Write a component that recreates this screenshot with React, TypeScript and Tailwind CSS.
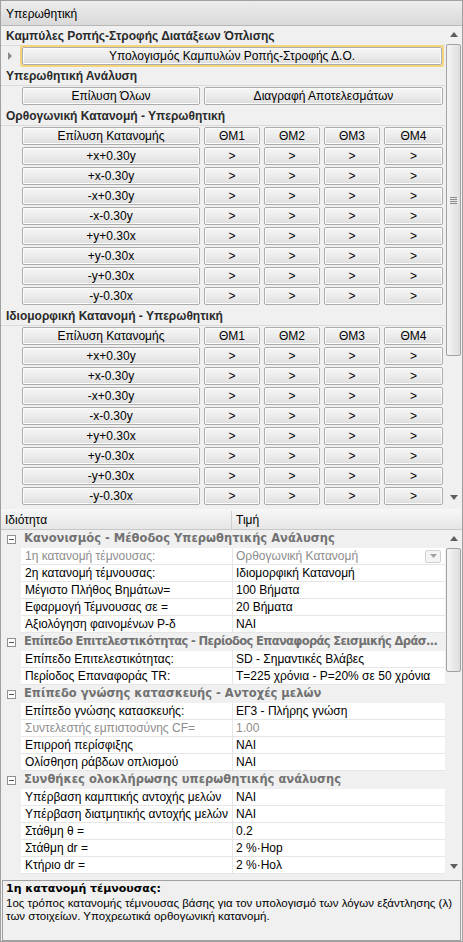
import React from 'react'

const DIRS = ['+x+0.30y', '+x-0.30y', '-x+0.30y', '-x-0.30y', '+y+0.30x', '+y-0.30x', '-y+0.30x', '-y-0.30x']

type Prop = { name: string; value: string; disabled?: boolean; combo?: boolean }
type Cat = { title: string; tight?: boolean; rows: Prop[] }

const PROPS: Cat[] = [
  {
    title: 'Κανονισμός - Μέθοδος Υπερωθητικής Ανάλυσης',
    rows: [
      { name: '1η κατανομή τέμνουσας:', value: 'Ορθογωνική Κατανομή', disabled: true, combo: true },
      { name: '2η κατανομή τέμνουσας:', value: 'Ιδιομορφική Κατανομή' },
      { name: 'Μέγιστο Πλήθος Βημάτων=', value: '100 Βήματα' },
      { name: 'Εφαρμογή Τέμνουσας σε =', value: '20 Βήματα' },
      { name: 'Αξιολόγηση φαινομένων P-δ', value: 'ΝΑΙ' },
    ],
  },
  {
    title: 'Επίπεδο Επιτελεστικότητας - Περίοδος Επαναφοράς Σεισμικής Δράσ...',
    tight: true,
    rows: [
      { name: 'Επίπεδο Επιτελεστικότητας:', value: 'SD - Σημαντικές Βλάβες' },
      { name: 'Περίοδος Επαναφοράς TR:', value: 'T=225 χρόνια - P=20% σε 50 χρόνια' },
    ],
  },
  {
    title: 'Επίπεδο γνώσης κατασκευής - Αντοχές μελών',
    rows: [
      { name: 'Επίπεδο γνώσης κατασκευής:', value: 'ΕΓ3 - Πλήρης γνώση' },
      { name: 'Συντελεστής εμπιστοσύνης CF=', value: '1.00', disabled: true },
      { name: 'Επιρροή περίσφιξης', value: 'ΝΑΙ' },
      { name: 'Ολίσθηση ράβδων οπλισμού', value: 'ΝΑΙ' },
    ],
  },
  {
    title: 'Συνθήκες ολοκλήρωσης υπερωθητικής ανάλυσης',
    rows: [
      { name: 'Υπέρβαση καμπτικής αντοχής μελών', value: 'ΝΑΙ' },
      { name: 'Υπέρβαση διατμητικής αντοχής μελών', value: 'ΝΑΙ' },
      { name: 'Στάθμη θ =', value: '0.2' },
      { name: 'Στάθμη dr =', value: '2 %·Hop' },
      { name: 'Κτήριο dr =', value: '2 %·Hoλ' },
    ],
  },
]

function Btn({ children, className = '' }: { children: React.ReactNode; className?: string }) {
  return (
    <div className={`flex h-[18px] items-center justify-center rounded-[2px] border border-[#acacac] bg-gradient-to-b from-[#f6f6f6] via-[#ececec] to-[#dcdcdc] leading-none text-black shadow-[inset_0_0_0_1px_#fcfcfc] ${className}`}>
      {children}
    </div>
  )
}

function SectionHead({ title }: { title: string }) {
  return (
    <div className="flex h-[20px] items-center border-b border-[#dadada] bg-[#f0f0f0] pl-[5px] font-bold text-[#2b2b2b]">
      {title}
    </div>
  )
}

function Row({ children }: { children: React.ReactNode }) {
  return <div className="flex h-[20px] items-center gap-[4px] pl-[21px]">{children}</div>
}

function DirGrid() {
  return (
    <>
      <Row>
        <Btn className="w-[178px]">Επίλυση Κατανομής</Btn>
        {['ΘΜ1', 'ΘΜ2', 'ΘΜ3', 'ΘΜ4'].map((t, i) => (
          <Btn key={t} className={i === 3 ? 'w-[59px]' : 'w-[56px]'}>{t}</Btn>
        ))}
      </Row>
      {DIRS.map((d) => (
        <Row key={d}>
          <Btn className="w-[178px]">{d}</Btn>
          {[0, 1, 2, 3].map((i) => (
            <Btn key={i} className={i === 3 ? 'w-[59px]' : 'w-[56px]'}>&gt;</Btn>
          ))}
        </Row>
      ))}
    </>
  )
}

function ScrollBar({ thumbTop, thumbHeight }: { thumbTop: number; thumbHeight: number }) {
  return (
    <div className="relative flex w-[17px] shrink-0 flex-col bg-[#f0f0f0]">
      <div className="flex h-[17px] items-center justify-center">
        <svg viewBox="0 0 8 5" className="h-[5px] w-[8px]"><path d="M4 0 8 5H0z" fill="#5e5e5e" /></svg>
      </div>
      <div className="flex-1" />
      <div className="flex h-[17px] items-center justify-center">
        <svg viewBox="0 0 8 5" className="h-[5px] w-[8px]"><path d="M0 0h8L4 5z" fill="#5e5e5e" /></svg>
      </div>
      <div
        className="absolute left-[1px] right-[1px] flex items-center justify-center rounded-[2px] border border-[#a2a2a2] bg-gradient-to-r from-[#f4f4f4] to-[#dedede]"
        style={{ top: thumbTop, height: thumbHeight }}
      >
        {thumbHeight > 200 ? (
          <div className="flex flex-col gap-[1px]">
            <div className="h-px w-[7px] bg-[#8a8a8a]" />
            <div className="h-px w-[7px] bg-[#8a8a8a]" />
            <div className="h-px w-[7px] bg-[#8a8a8a]" />
            <div className="h-px w-[7px] bg-[#8a8a8a]" />
          </div>
        ) : null}
      </div>
    </div>
  )
}

export default function App() {
  return (
    <div className="flex h-[942px] w-[463px] flex-col overflow-hidden border border-[#a0a0a0] bg-[#f0f0f0] font-['Liberation_Sans',Arial,sans-serif] text-[12px] text-black">
      <div className="flex h-[25px] shrink-0 items-center border-b border-[#b8b8b8] bg-gradient-to-b from-[#ededed] to-[#d9d9d9] pl-[5px] pt-[1px]">
        Υπερωθητική
      </div>

      <div className="flex h-[480px] shrink-0 overflow-hidden">
        <div className="flex-1 overflow-hidden">
          <SectionHead title="Καμπύλες Ροπής-Στροφής Διατάξεων Όπλισης" />
          <div className="relative flex h-[20px] items-center pl-[19px] pr-[1px]">
            <svg viewBox="0 0 4 8" className="absolute left-[7px] top-[6px] h-[8px] w-[4px]"><path d="M0 0 4 4 0 8z" fill="#8a8a8a" /></svg>
            <div className="w-full rounded-[3px] border-2 border-[#f6d57a]">
              <Btn className="w-full border-[#9c9c9c]">Υπολογισμός Καμπυλών Ροπής-Στροφής Δ.Ο.</Btn>
            </div>
          </div>
          <SectionHead title="Υπερωθητική Ανάλυση" />
          <Row>
            <Btn className="w-[178px]">Επίλυση Όλων</Btn>
            <Btn className="w-[239px]">Διαγραφή Αποτελεσμάτων</Btn>
          </Row>
          <SectionHead title="Ορθογωνική Κατανομή - Υπερωθητική" />
          <DirGrid />
          <SectionHead title="Ιδιομορφική Κατανομή - Υπερωθητική" />
          <DirGrid />
        </div>
        <ScrollBar thumbTop={18} thumbHeight={312} />
      </div>

      <div className="h-[3px] shrink-0" />

      <div className="flex h-[21px] shrink-0 items-center border-b border-[#c8c8c8] bg-gradient-to-b from-[#f7f7f7] to-[#e6e6e6] pt-[1px]">
        <div className="w-[231px] border-r border-[#cfcfcf] pl-[4px]">Ιδιότητα</div>
        <div className="pl-[4px]">Τιμή</div>
      </div>

      <div className="flex h-[345px] shrink-0 overflow-hidden">
        <div className="min-w-0 flex-1 overflow-hidden">
          {PROPS.map((cat) => (
            <div key={cat.title}>
              <div className="flex h-[18px] items-center whitespace-nowrap font-['DejaVu_Sans',sans-serif] text-[11.5px] font-bold text-[#727272]">
                <div className="flex w-[20px] shrink-0 justify-center">
                  <div className="flex h-[9px] w-[9px] items-center justify-center border border-[#919191] bg-white">
                    <div className="h-px w-[5px] bg-[#555]" />
                  </div>
                </div>
                <span className={`min-w-0 pl-[3px] ${cat.tight ? 'tracking-[-0.65px]' : ''}`}>{cat.title}</span>
              </div>
              {cat.rows.map((r) => (
                <div key={r.name} className="flex h-[17px] pl-[20px]">
                  <div className={`flex w-[212px] items-center border-b border-r border-[#e6e6e6] bg-white pl-[4px] ${r.disabled ? 'text-[#8d8d8d]' : ''}`}>
                    {r.name}
                  </div>
                  <div className={`flex flex-1 items-center border-b border-[#e6e6e6] bg-white pl-[3px] ${r.disabled ? 'text-[#8d8d8d]' : ''}`}>
                    <span className="flex-1">{r.value}</span>
                    {r.combo ? (
                      <div className="mr-[4px] flex h-[13px] w-[16px] items-center justify-center rounded-[2px] border border-[#d0d0d0] bg-[#f4f4f4]">
                        <svg viewBox="0 0 7 4" className="h-[4px] w-[7px]"><path d="M0 0h7L3.5 4z" fill="#a0a0a0" /></svg>
                      </div>
                    ) : null}
                  </div>
                </div>
              ))}
            </div>
          ))}
        </div>
        <ScrollBar thumbTop={18} thumbHeight={124} />
      </div>

      <div className="h-[5px] shrink-0" />

      <div className="mx-[1px] flex-1 border border-[#a0a0a0] px-[3px] pt-[1px] leading-[13px]">
        <div className="font-['DejaVu_Sans',sans-serif] text-[11px] font-bold">1η κατανομή τέμνουσας:</div>
        <div className="pt-[2px] text-[11.5px]">1ος τρόπος κατανομής τέμνουσας βάσης για τον υπολογισμό των λόγων εξάντλησης (λ) των στοιχείων. Υποχρεωτικά ορθογωνική κατανομή.</div>
      </div>
    </div>
  )
}
